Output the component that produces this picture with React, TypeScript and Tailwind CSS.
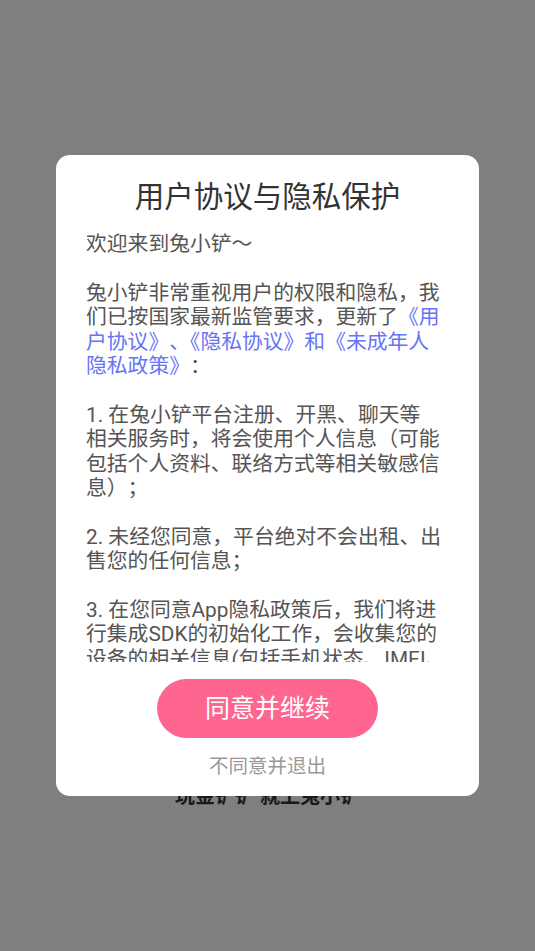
import React from "react";

const FONT = "Roboto, 'Noto Sans CJK SC', 'Noto Sans', sans-serif";

function Lines({ lines, className = "" }: { lines: React.ReactNode[]; className?: string }) {
  return (
    <div className={className}>
      {lines.map((l, i) => (
        <div key={i} className="whitespace-nowrap">
          {l}
        </div>
      ))}
    </div>
  );
}

export default function App() {
  const link = "text-[#6674f5]";
  return (
    <div
      className="relative h-[951px] w-full overflow-hidden bg-white [text-spacing-trim:space-all]"
      style={{ fontFamily: FONT }}
    >
      {/* underlying page */}
      <div className="pt-[784px] text-center text-[20px] font-bold leading-[24px] text-[#333]">
        玩金铲铲 就上兔小铲
      </div>

      {/* overlay */}
      <div className="absolute inset-0 bg-black/50 pt-[155px]">
        <div className="mx-[56px] flex h-[641px] w-[423px] flex-col items-center rounded-[14px] bg-white">
          <div className="pt-[22px] text-[29.5px] leading-[40px] text-[#333]">用户协议与隐私保护</div>

          <div className="mt-[15px] h-[430px] w-full overflow-hidden px-[30px] text-[20.8px] leading-[24.4px] text-[#555]">
            <Lines className="mb-[24.4px]" lines={["欢迎来到兔小铲～"]} />
            <Lines
              className="mb-[24.4px]"
              lines={[
                "兔小铲非常重视用户的权限和隐私，我",
                <>
                  们已按国家最新监管要求，更新了<span className={link}>《用</span>
                </>,
                <>
                  <span className={link}>
                    户协议》<span className="tracking-[-0.5em]">、</span>《隐私协议》和《未成年人
                  </span>
                </>,
                <>
                  <span className={link}>隐私政策》</span>：
                </>,
              ]}
            />
            <Lines
              className="mb-[24.4px]"
              lines={[
                "1. 在兔小铲平台注册、开黑、聊天等",
                "相关服务时，将会使用个人信息（可能",
                "包括个人资料、联络方式等相关敏感信",
                "息）；",
              ]}
            />
            <Lines
              className="mb-[24.4px]"
              lines={["2. 未经您同意，平台绝对不会出租、出", "售您的任何信息；"]}
            />
            <Lines
              lines={[
                "3. 在您同意App隐私政策后，我们将进",
                "行集成SDK的初始化工作，会收集您的",
                "设备的相关信息(包括手机状态、IMEI、",
                "MAC地址、IMSI等)，以保障App正常",
                "数据统计和安全风控。",
              ]}
            />
          </div>

          <button className="mt-[17px] flex h-[59px] w-[221px] items-center justify-center rounded-full bg-[#ff668f] text-[25px] leading-none text-white">
            同意并继续
          </button>
          <div className="mt-[17px] text-[19.5px] leading-[24px] text-[#999]">不同意并退出</div>
        </div>
      </div>
    </div>
  );
}
